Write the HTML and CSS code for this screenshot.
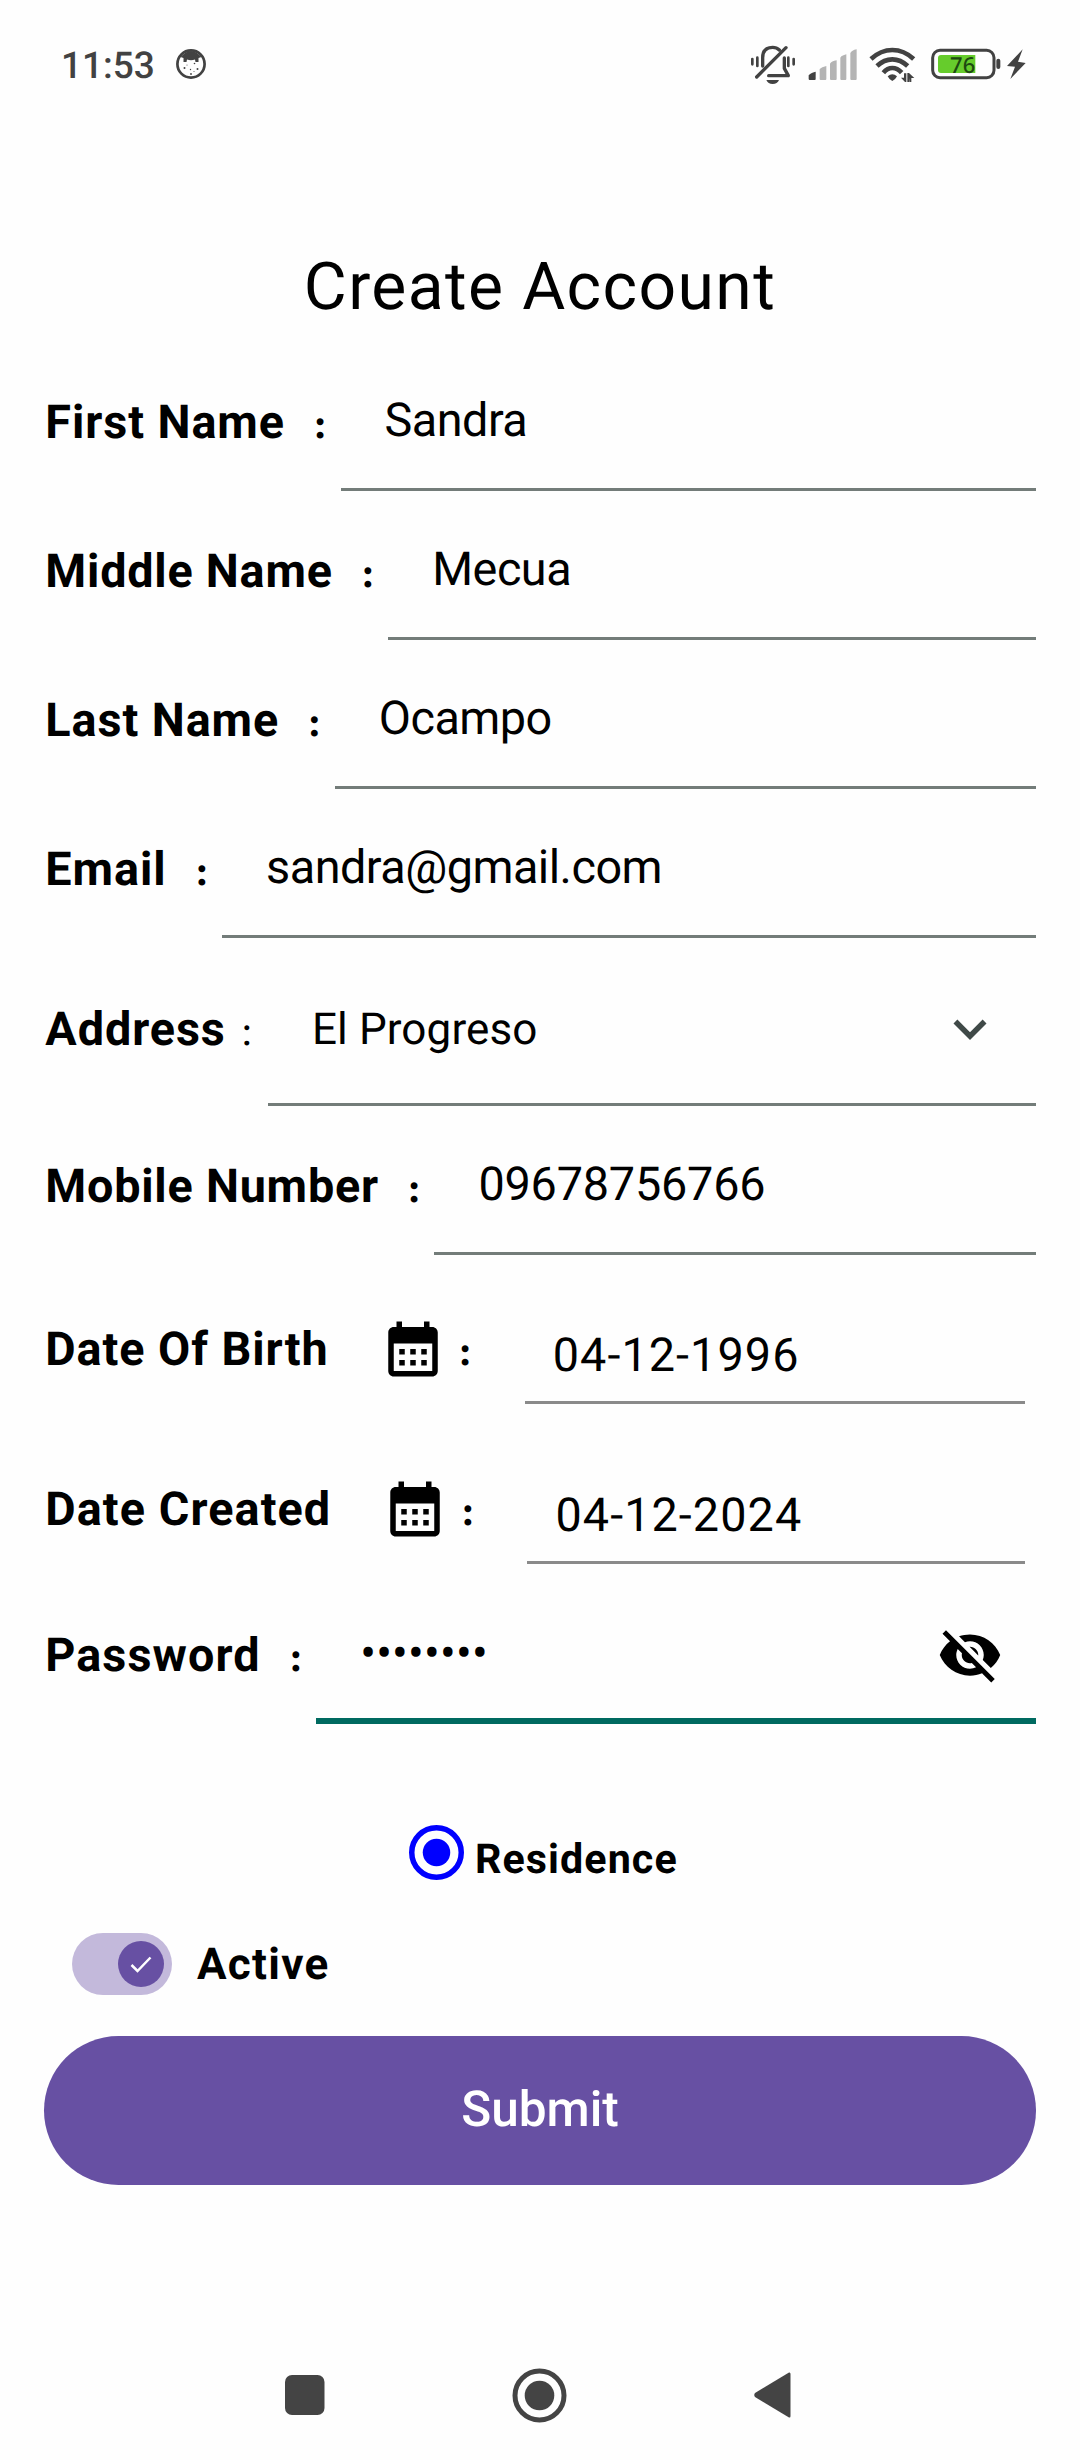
FILE: index.html
```html
<!DOCTYPE html>
<html lang="en">
<head>
<meta charset="utf-8">
<title>Create Account</title>
<link rel="stylesheet" href="styles.css">
</head>
<body>
<div class="screen">
  <header class="status">
    <span class="clock">11:53</span>
    <svg class="face" viewBox="0 0 30 30" width="30" height="30">
      <circle cx="15" cy="15" r="13.6" fill="none" stroke="#424242" stroke-width="2.7"/>
      <path d="M4.500 8 Q15 -4 25.500 8 L22.500 9 L22.500 13 L19.500 13 L19 10.500 Q15 12 11 10.500 L10.500 13 L7.500 13 L7.500 9Z" fill="#424242"/>
      <g fill="#424242"><circle cx="8.500" cy="19" r="1"/><circle cx="18.500" cy="14.500" r=".8"/><circle cx="21.500" cy="20" r="1"/><circle cx="14.500" cy="20.500" r=".7"/><circle cx="15" cy="25" r=".9"/><circle cx="11" cy="16" r=".5"/><circle cx="18" cy="22.500" r=".5"/></g>
    </svg>
    <span class="spacer"></span>
    <svg class="bell" viewBox="60 0 138 210" width="46" height="70">
      <g fill="none" stroke="#424242" stroke-width="10" stroke-linecap="round" stroke-linejoin="round">
        <path d="M80 141L168 53"/>
        <path d="M98 108V83Q98 52 128 52Q140 52 148 60"/>
        <path d="M163 84V115L175 137H116"/>
      </g>
      <g stroke="#424242" stroke-width="8" stroke-linecap="round"><path d="M67 87V103M82 83V108M175 83V108M191 87V103"/></g>
      <path d="M109 150H147Q142 162 128 162T109 150Z" fill="#424242"/>
    </svg>
    <svg class="signal" viewBox="232 0 156 210" width="52" height="70">
      <path d="M237 147V136Q240 130 258 125V147Q258 150 255 150H240Q237 150 237 147Z" fill="#424242"/>
      <path d="M270 147V117Q276 111 290 108V147Q290 150 287 150H273Q270 150 270 147ZM301 147V101Q305 94 321 91V147Q321 150 318 150H304Q301 150 301 147ZM332 147V83Q335 77 350 73V147Q350 150 347 150H335Q332 150 332 147ZM362 147V69Q366 61 381 58V147Q381 150 378 150H365Q362 150 362 147Z" fill="#b4b4b4"/>
    </svg>
    <svg class="wifi" viewBox="412 0 156 210" width="52" height="70">
      <g fill="none" stroke="#424242" stroke-width="14">
        <path d="M424 87Q453 60 488 60T552 87"/>
        <path d="M442 108Q463 88 488 88T534 108"/>
        <path d="M461 128Q473 114 488 114T516 128"/>
      </g>
      <path d="M474 139Q488 126 502 139Q498 148 488 153Q478 148 474 139Z" fill="#424242"/>
      <path d="M523 130h7v26h-4l-12-13h9zM540 156h-7v-27h5l16 15h-9v12h-4v-12z" fill="#424242"/>
    </svg>
    <svg class="battery" viewBox="596 0 220 210" width="73.333" height="70">
      <rect x="607" y="61" width="184" height="82" rx="22" fill="none" stroke="#424242" stroke-width="9"/>
      <path d="M632 75H735V129H632Q623 129 623 120V84Q623 75 632 75Z" fill="#66cc2c"/>
      <rect x="798" y="86" width="12" height="31" rx="6" fill="#424242"/>
      <text class="charge" x="697" y="128" text-anchor="middle">76</text>
    </svg>
    <svg viewBox="826 0 66 210" width="22" height="70"><path d="M879 58L832 108L856 110L842 147L888 99L865 95Z" fill="#424242"/></svg>
  </header>

  <main>
    <h1>Create Account</h1>

    <div class="row"><span class="label">First Name</span><span class="colon">:</span><div class="field">Sandra</div></div>
    <div class="row tight"><span class="label">Middle Name</span><span class="colon">:</span><div class="field">Mecua</div></div>
    <div class="row"><span class="label">Last Name</span><span class="colon">:</span><div class="field">Ocampo</div></div>
    <div class="row"><span class="label">Email</span><span class="colon">:</span><div class="field">sandra@gmail.com</div></div>
    <div class="row address"><span class="label">Address</span><span class="colon">:</span>
      <div class="field">El Progreso
        <svg class="trailing" viewBox="0 0 24 24"><path fill="#3f4947" d="M7.410 8.590L12 13.170l4.590-4.580L18 10l-6 6-6-6 1.410-1.410z"/></svg>
      </div>
    </div>
    <div class="row tight"><span class="label">Mobile Number</span><span class="colon">:</span><div class="field number">09678756766</div></div>
    <div class="row date"><span class="label">Date Of Birth</span>
      <svg class="calendar" viewBox="0 0 24 24"><path d="M19 4h-1V2h-2v2H8V2H6v2H5c-1.110 0-1.990.9-1.990 2L3 20c0 1.100.89 2 2 2h14c1.100 0 2-.9 2-2V6c0-1.100-.9-2-2-2zm0 16H5V10h14v10zM9 14H7v-2h2v2zm4 0h-2v-2h2v2zm4 0h-2v-2h2v2zm-8 4H7v-2h2v2zm4 0h-2v-2h2v2zm4 0h-2v-2h2v2z"/></svg>
      <span class="colon">:</span><div class="field">04-12-1996</div></div>
    <div class="row date created loose"><span class="label">Date Created</span>
      <svg class="calendar" viewBox="0 0 24 24"><path d="M19 4h-1V2h-2v2H8V2H6v2H5c-1.110 0-1.990.9-1.990 2L3 20c0 1.100.89 2 2 2h14c1.100 0 2-.9 2-2V6c0-1.100-.9-2-2-2zm0 16H5V10h14v10zM9 14H7v-2h2v2zm4 0h-2v-2h2v2zm4 0h-2v-2h2v2zm-8 4H7v-2h2v2zm4 0h-2v-2h2v2zm4 0h-2v-2h2v2z"/></svg>
      <span class="colon">:</span><div class="field">04-12-2024</div></div>
    <div class="row password loose"><span class="label">Password</span><span class="colon">:</span>
      <div class="field">••••••••
        <svg class="trailing" viewBox="0 0 24 24"><path d="M12 7c2.760 0 5 2.240 5 5 0 .65-.13 1.260-.36 1.830l2.920 2.920c1.510-1.260 2.700-2.890 3.430-4.750-1.730-4.390-6-7.500-11-7.500-1.400 0-2.740.25-3.980.7l2.160 2.160C10.740 7.130 11.350 7 12 7zM2 4.270l2.280 2.280.46.46C3.080 8.300 1.780 10.020 1 12c1.730 4.390 6 7.500 11 7.500 1.550 0 3.030-.3 4.380-.84l.42.42L19.730 22 21 20.730 3.270 3 2 4.270zM7.530 9.800l1.550 1.550c-.05.21-.08.43-.08.65 0 1.660 1.340 3 3 3 .22 0 .44-.03.65-.08l1.550 1.550c-.67.33-1.410.53-2.200.53-2.760 0-5-2.240-5-5 0-.79.2-1.530.53-2.200zm4.310-.78l3.150 3.150.02-.16c0-1.660-1.340-3-3-3l-.17.01z"/></svg>
      </div>
    </div>

    <div class="residence">
      <svg viewBox="0 0 55 55" width="55" height="55"><circle cx="27.500" cy="27.500" r="24.750" fill="none" stroke="#00f" stroke-width="5.500"/><circle cx="27.500" cy="27.500" r="13.750" fill="#00f"/></svg>
      <span>Residence</span>
    </div>

    <div class="active">
      <div class="switch"><div class="thumb"><svg viewBox="0 0 46 46" width="46" height="46"><path d="M13.500 24l6 6 13-13.500" fill="none" stroke="#fff" stroke-width="2.500"/></svg></div></div>
      <span>Active</span>
    </div>

    <div class="submit">Submit</div>
  </main>

  <nav class="navbar">
    <svg viewBox="0 0 40 40" width="40" height="40"><rect width="39.500" height="40" rx="7" fill="#444"/></svg>
    <svg viewBox="0 0 55 55" width="55" height="55"><circle cx="27.500" cy="27.500" r="24.500" fill="none" stroke="#444" stroke-width="5"/><circle cx="27.500" cy="27.500" r="14.800" fill="#444"/></svg>
    <svg viewBox="0 0 37 46" width="37" height="46"><path d="M35 .5Q36.500 0 36.500 2V44Q36.500 46 35 45.500L1 25Q-.5 23 1 21Z" fill="#444"/></svg>
  </nav>
</div>
</body>
</html>
```
FILE: styles.css
```css
* { box-sizing: border-box; }

body {
  margin: 0;
  background: #fefefe;
  color: #000;
  font-family: Roboto, sans-serif;
  text-rendering: geometricPrecision;
}

.screen {
  display: flex;
  flex-direction: column;
  width: 1080px;
  height: 2460px;
}

svg { display: block; flex: none; }

.status {
  display: flex;
  align-items: flex-start;
  height: 130px;
  padding: 30px 52.700px 0 61px;
  color: #424242;
}
.clock {
  width: 115px;
  margin-top: 10.500px;
  font-size: 37px;
  font-weight: 500;
  line-height: 52px;
}
.face { margin-top: 19px; }
.spacer { flex: 1; }
.bell { margin-right: 11.300px; }
.signal { margin-right: 8px; }
.wifi { margin-right: 9.300px; }
.battery { margin-right: 3.300px; }
.charge {
  font-family: "Noto Sans", sans-serif;
  font-size: 66px;
  font-weight: 500;
  fill: #1d4a10;
}

main {
  display: flex;
  flex-direction: column;
  padding: 0 44px;
}

h1 {
  height: 212px;
  margin: 0;
  padding-top: 118px;
  font-size: 66px;
  font-weight: 400;
  line-height: 80px;
  letter-spacing: 1.400px;
  text-align: center;
}

.row {
  display: flex;
  align-items: flex-start;
  height: 149px;
}
.label {
  margin: 51px 0 0 1.300px;
  font-size: 46.750px;
  font-weight: 700;
  line-height: 60px;
  letter-spacing: .93px;
  white-space: nowrap;
}
.tight .label { letter-spacing: .77px; }
.loose .label { letter-spacing: 1.080px; }
.colon {
  width: 27.200px;
  margin: 53px 0 0 28.400px;
  font-family: "Liberation Serif", serif;
  font-size: 42px;
  font-weight: 700;
  line-height: 60px;
}
.field {
  display: flex;
  justify-content: space-between;
  flex: 1;
  height: 149px;
  padding: 49px 33px 0 44px;
  border-bottom: 3px solid #737c79;
  font-size: 46.750px;
  line-height: 60px;
  letter-spacing: -.5px;
}
.number { letter-spacing: -.190px; }
.trailing { width: 66px; height: 66px; }

.address { margin-top: 19px; }
.address .label { margin-top: 43px; }
.address .colon { width: 27px; margin: 45px 0 0 15.200px; font-weight: 400; }
.address .field { padding-top: 42px; font-size: 44px; letter-spacing: .1px; }
.address .trailing { margin-top: -3px; }

.date { padding-right: 11px; }
.date .label { margin-top: 65px; }
.date .calendar { width: 66px; height: 66px; margin: 60.500px 0 0 51.200px; }
.date .colon { width: 66.400px; margin: 67px 0 0 12.600px; }
.date .field {
  padding: 71px 0 0 28px;
  border-color: #8a8a8a;
  letter-spacing: 1.080px;
}

.created, .password { margin-top: 11px; }
.password .field { border-bottom: 6px solid #006a60; letter-spacing: .2px; }
.password .trailing { margin-top: -2px; }

.residence {
  display: flex;
  height: 55px;
  margin-top: 101px;
  padding-left: 365px;
  font-size: 41.250px;
  font-weight: 700;
  line-height: 60px;
  letter-spacing: 1.060px;
}
.residence span { margin: 5px 0 0 11px; }

.active {
  display: flex;
  height: 62px;
  margin-top: 53px;
  padding-left: 27.500px;
  font-size: 44px;
  font-weight: 700;
  line-height: 62px;
  letter-spacing: 1.300px;
}
.active span { margin-left: 25.500px; }
.switch {
  display: flex;
  justify-content: flex-end;
  width: 100px;
  padding: 8px;
  border-radius: 31px;
  background: #c3b9db;
}
.thumb {
  width: 46px;
  height: 46px;
  border-radius: 50%;
  background: #6750a3;
}

.submit {
  height: 149px;
  margin-top: 41px;
  border-radius: 75px;
  background: #6750a3;
  color: #fff;
  font-size: 49.500px;
  font-weight: 500;
  line-height: 149px;
  text-align: center;
}

.navbar {
  display: flex;
  align-items: center;
  height: 130px;
  margin-top: auto;
  padding-left: 285px;
}
.navbar svg:nth-child(2) { margin-left: 186.500px; }
.navbar svg:nth-child(3) { margin-left: 187.500px; }
```
